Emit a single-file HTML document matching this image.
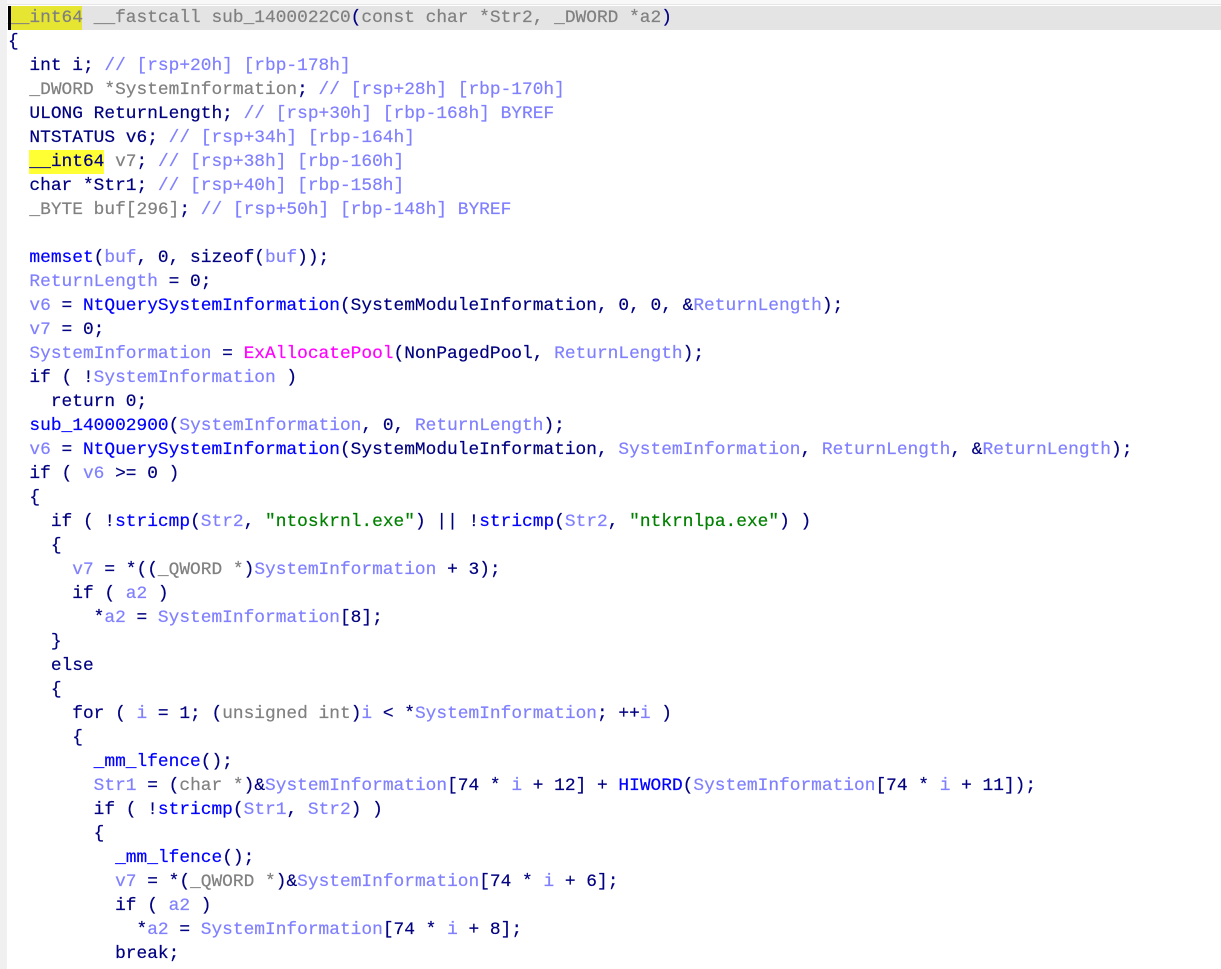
<!DOCTYPE html>
<html>
<head>
<meta charset="utf-8">
<style>
html,body{margin:0;padding:0;background:#fff}
body{width:1221px;height:969px;overflow:hidden;position:relative;font-family:"Liberation Mono",monospace;font-size:17.85px;color:#000080}
#left{position:absolute;left:0;top:0;width:7px;height:969px;background:#f0f0f0}
#top{position:absolute;left:0;top:0;width:1221px;height:4px;background:#f8f8f8;border-bottom:1px solid #e6e6e6}
#bar{position:absolute;left:8px;top:6px;width:1213px;height:24px;background:#e4e4e4}
#h1{position:absolute;left:11px;top:6px;width:71px;height:24px;background:#e6e632}
#cur{position:absolute;left:8px;top:6px;width:3px;height:24px;background:#000;z-index:2}
#h2{position:absolute;left:29px;top:150px;width:75px;height:24px;background:#ffff33}
#code{position:absolute;left:8px;top:6px;margin:0;font:inherit;line-height:24px;white-space:pre;-webkit-text-stroke:0.2px}
.g{color:#808080}.v{color:#8080ff}.f{color:#0000ff}.s{color:#008000}.p{color:#ff00ff}
</style>
</head>
<body>
<div id="top"></div><div id="left"></div>
<div id="bar"></div><div id="h1"></div><div id="cur"></div><div id="h2"></div>
<pre id="code"><span class="g">__int64 __fastcall sub_1400022C0</span>(<span class="g">const char *Str2, _DWORD *a2</span>)
{
  int i; <span class="v">// [rsp+20h] [rbp-178h]</span>
  <span class="g">_DWORD *SystemInformation</span>; <span class="v">// [rsp+28h] [rbp-170h]</span>
  ULONG ReturnLength; <span class="v">// [rsp+30h] [rbp-168h] BYREF</span>
  NTSTATUS v6; <span class="v">// [rsp+34h] [rbp-164h]</span>
  __int64 <span class="g">v7</span>; <span class="v">// [rsp+38h] [rbp-160h]</span>
  char *Str1; <span class="v">// [rsp+40h] [rbp-158h]</span>
  <span class="g">_BYTE buf[296]</span>; <span class="v">// [rsp+50h] [rbp-148h] BYREF</span>

  <span class="f">memset</span>(<span class="v">buf</span>, 0, sizeof(<span class="v">buf</span>));
  <span class="v">ReturnLength</span> = 0;
  <span class="v">v6</span> = <span class="f">NtQuerySystemInformation</span>(SystemModuleInformation, 0, 0, &amp;<span class="v">ReturnLength</span>);
  <span class="v">v7</span> = 0;
  <span class="v">SystemInformation</span> = <span class="p">ExAllocatePool</span>(NonPagedPool, <span class="v">ReturnLength</span>);
  if ( !<span class="v">SystemInformation</span> )
    return 0;
  <span class="f">sub_140002900</span>(<span class="v">SystemInformation</span>, 0, <span class="v">ReturnLength</span>);
  <span class="v">v6</span> = <span class="f">NtQuerySystemInformation</span>(SystemModuleInformation, <span class="v">SystemInformation</span>, <span class="v">ReturnLength</span>, &amp;<span class="v">ReturnLength</span>);
  if ( <span class="v">v6</span> &gt;= 0 )
  {
    if ( !<span class="f">stricmp</span>(<span class="v">Str2</span>, <span class="s">"ntoskrnl.exe"</span>) || !<span class="f">stricmp</span>(<span class="v">Str2</span>, <span class="s">"ntkrnlpa.exe"</span>) )
    {
      <span class="v">v7</span> = *((<span class="g">_QWORD *</span>)<span class="v">SystemInformation</span> + 3);
      if ( <span class="v">a2</span> )
        *<span class="v">a2</span> = <span class="v">SystemInformation</span>[8];
    }
    else
    {
      for ( <span class="v">i</span> = 1; (<span class="g">unsigned int</span>)<span class="v">i</span> &lt; *<span class="v">SystemInformation</span>; ++<span class="v">i</span> )
      {
        <span class="f">_mm_lfence</span>();
        <span class="v">Str1</span> = (<span class="g">char *</span>)&amp;<span class="v">SystemInformation</span>[74 * <span class="v">i</span> + 12] + <span class="f">HIWORD</span>(<span class="v">SystemInformation</span>[74 * <span class="v">i</span> + 11]);
        if ( !<span class="f">stricmp</span>(<span class="v">Str1</span>, <span class="v">Str2</span>) )
        {
          <span class="f">_mm_lfence</span>();
          <span class="v">v7</span> = *(<span class="g">_QWORD *</span>)&amp;<span class="v">SystemInformation</span>[74 * <span class="v">i</span> + 6];
          if ( <span class="v">a2</span> )
            *<span class="v">a2</span> = <span class="v">SystemInformation</span>[74 * <span class="v">i</span> + 8];
          break;
</pre>
</body>
</html>
